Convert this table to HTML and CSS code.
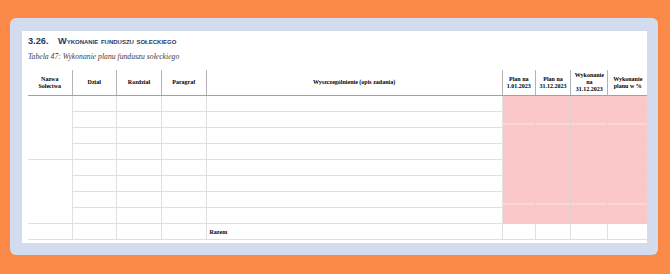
FILE: index.html
```html
<!DOCTYPE html>
<html lang="pl">
<head>
<meta charset="utf-8">
<title>Wykonanie funduszu sołeckiego</title>
<link rel="stylesheet" href="styles.css">
</head>
<body>
<div class="card">
  <div class="page">
    <h2 class="heading"><span class="num">3.26.</span><span class="title">Wykonanie funduszu sołeckiego</span></h2>
    <p class="caption">Tabela 47: Wykonanie planu funduszu sołeckiego</p>
    <table class="grid">
      <colgroup>
        <col class="c-name"><col class="c-dz"><col class="c-rz"><col class="c-par"><col class="c-desc">
        <col class="c-p1"><col class="c-p2"><col class="c-w1"><col class="c-w2">
      </colgroup>
      <thead>
        <tr>
          <th>Nazwa<br>Sołectwa</th>
          <th>Dział</th>
          <th>Rozdział</th>
          <th>Paragraf</th>
          <th>Wyszczególnienie (opis zadania)</th>
          <th>Plan na<br>1.01.2023</th>
          <th>Plan na<br>31.12.2023</th>
          <th>Wykonanie<br>na<br>31.12.2023</th>
          <th>Wykonanie<br>planu w %</th>
        </tr>
      </thead>
      <tbody>
        <tr><td class="name" rowspan="4"></td><td></td><td></td><td></td><td></td><td class="pk"></td><td class="pk"></td><td class="pk"></td><td class="pk"></td></tr>
        <tr><td></td><td></td><td></td><td></td><td class="pk seam"></td><td class="pk seam"></td><td class="pk seam"></td><td class="pk seam"></td></tr>
        <tr><td></td><td></td><td></td><td></td><td class="pk"></td><td class="pk"></td><td class="pk"></td><td class="pk"></td></tr>
        <tr><td></td><td></td><td></td><td></td><td class="pk"></td><td class="pk"></td><td class="pk"></td><td class="pk"></td></tr>
        <tr><td class="name" rowspan="4"></td><td></td><td></td><td></td><td></td><td class="pk"></td><td class="pk"></td><td class="pk"></td><td class="pk"></td></tr>
        <tr><td></td><td></td><td></td><td></td><td class="pk"></td><td class="pk"></td><td class="pk"></td><td class="pk"></td></tr>
        <tr><td></td><td></td><td></td><td></td><td class="pk seam"></td><td class="pk seam"></td><td class="pk seam"></td><td class="pk seam"></td></tr>
        <tr><td></td><td></td><td></td><td></td><td class="pk"></td><td class="pk"></td><td class="pk"></td><td class="pk"></td></tr>
        <tr class="sum"><td class="name"></td><td></td><td></td><td></td><td class="label">Razem</td><td></td><td></td><td></td><td></td></tr>
      </tbody>
    </table>
  </div>
</div>
</body>
</html>
```

FILE: styles.css
```css
html, body {
  margin: 0;
  padding: 0;
}
body {
  background: #fb8947;
  width: 670px;
  height: 274px;
  overflow: hidden;
  padding: 18px 0 0 10px;
  box-sizing: border-box;
}
.card {
  width: 648px;
  height: 237px;
  background: #d3dcee;
  border-radius: 6px;
  padding: 13px 11px 12px 12px;
  box-sizing: border-box;
}
.page {
  background: #ffffff;
  height: 212px;
  padding: 4px 0 0 6px;
  box-sizing: border-box;
  display: flex;
  flex-direction: column;
}
.heading {
  margin: 0;
  font-family: "Liberation Sans", Arial, sans-serif;
  font-weight: bold;
  font-size: 9.2px;
  line-height: 12px;
  color: #1f3864;
  display: flex;
}
.num {
  width: 30px;
}
.title {
  font-variant: small-caps;
  letter-spacing: 0;
}
.caption {
  margin: 5px 0 0 0;
  font-family: "Liberation Serif", "Times New Roman", serif;
  font-style: italic;
  font-size: 7.7px;
  line-height: 10px;
  color: #404040;
}
.grid {
  margin-top: 8px;
  width: 619px;
  table-layout: fixed;
  border-collapse: collapse;
  font-family: "Liberation Serif", "Times New Roman", serif;
  font-size: 6px;
  color: #000000;
}
.c-name { width: 44px; }
.c-dz { width: 44.5px; }
.c-rz { width: 45px; }
.c-par { width: 44.5px; }
.c-desc { width: 296.3px; }
.c-p1 { width: 33px; }
.c-p2 { width: 35.4px; }
.c-w1 { width: 37.3px; }
.c-w2 { width: 39px; }
.grid th {
  height: 25px;
  padding: 0 1px;
  font-weight: bold;
  line-height: 7px;
  text-align: center;
  vertical-align: middle;
  border-left: 1px solid #b4b4b4;
  border-right: 1px solid #b4b4b4;
  border-bottom: 1px solid #a0a0a0;
  border-top: none;
}
.grid th:first-child {
  border-left: none;
}
.grid th:last-child {
  border-right: none;
}
.grid td {
  height: 15px;
  padding: 0;
  border: 1px solid #e0e0e0;
}
.grid tr > td:first-child {
  border-left: none;
}
.grid tr > td:last-child {
  border-right: none;
}
.grid td.pk {
  background: #fbc8c9;
  border-color: #e0d0d0;
}
.grid td.seam {
  background: linear-gradient(to bottom, #fbc8c9 0, #fbc8c9 11px, #fde2e2 11px, #fde2e2 12px, #fbc8c9 12px);
}
.grid td.label {
  font-weight: bold;
  padding-left: 3px;
  vertical-align: middle;
}
```
